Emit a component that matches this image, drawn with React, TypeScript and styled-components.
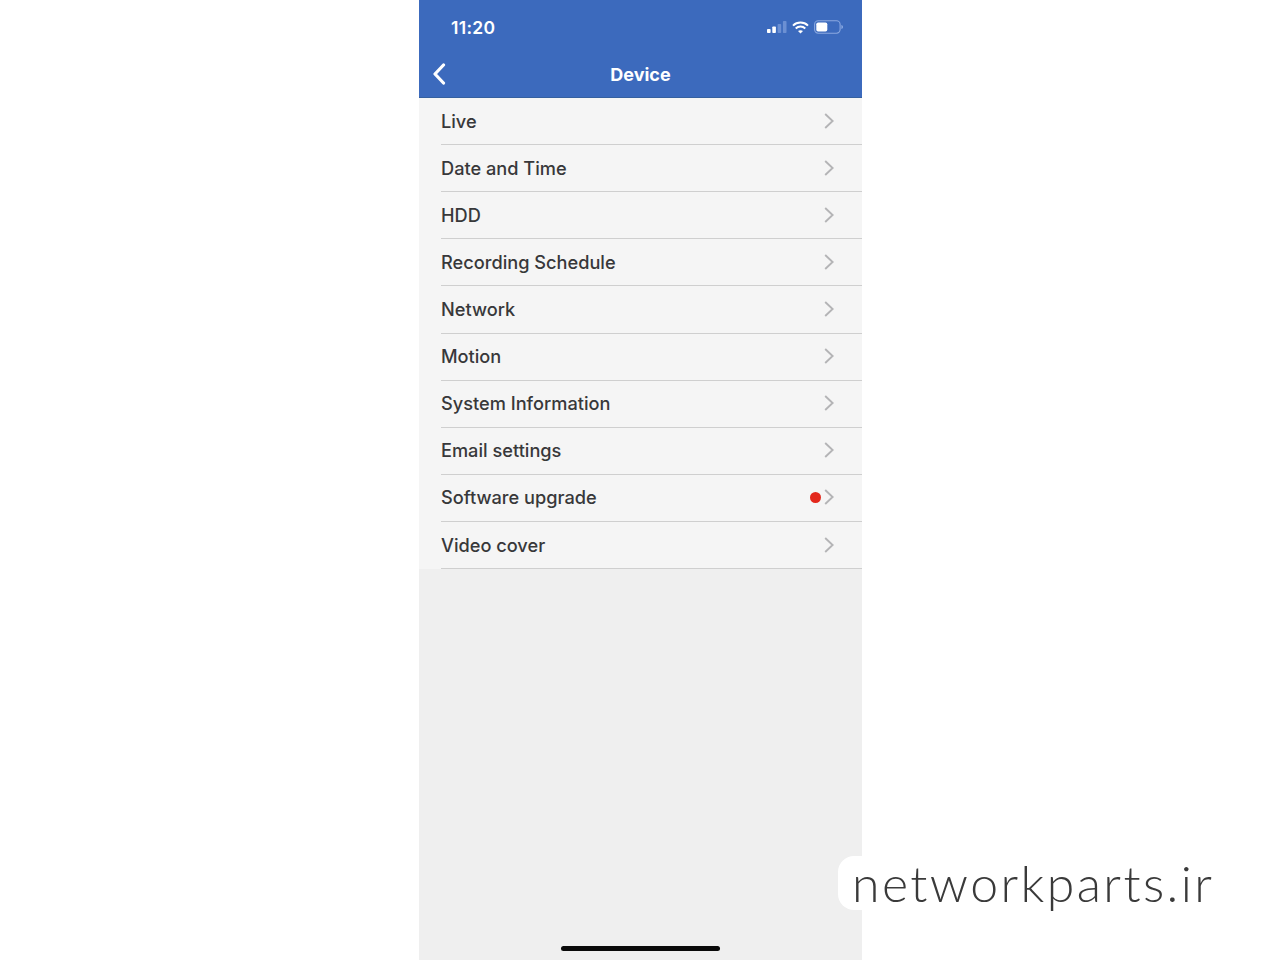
import React from "react";
import styled, { createGlobalStyle } from "styled-components";

const Global = createGlobalStyle`
  html, body { margin: 0; padding: 0; background: #fff; }
  body { font-family: Inter, "Liberation Sans", sans-serif; }
`;

const Page = styled.div`
  position: relative;
  width: 1280px;
  height: 960px;
  overflow: hidden;
  background: #fff;
  padding-left: 419px;
  box-sizing: border-box;
`;

const Phone = styled.main`
  position: relative;
  width: 443px;
  height: 960px;
  background: #efefef;
  display: flex;
  flex-direction: column;
`;

const Header = styled.header`
  height: 98px;
  background: #3c6abd;
  border-bottom: 1px solid #35609f;
  box-sizing: border-box;
  color: #fff;
  display: flex;
  flex-direction: column;
  flex-shrink: 0;
`;

const StatusBar = styled.div`
  height: 52px;
  display: flex;
  align-items: center;
  justify-content: space-between;
  padding: 2px 18px 0 32px;
`;

const Clock = styled.span`
  font-size: 17.5px;
  font-weight: 600;
  letter-spacing: 0.3px;
`;

const StatusIcons = styled.div`
  display: flex;
  align-items: center;
  gap: 5px;
`;

const NavBar = styled.div`
  position: relative;
  height: 46px;
  display: flex;
  align-items: center;
  justify-content: center;
`;

const BackIcon = styled.svg`
  position: absolute;
  left: 13px;
  top: 11px;
`;

const Title = styled.h1`
  margin: 0 0 0 0;
  font-size: 18px;
  font-weight: 700;
  line-height: 1;
`;

const List = styled.div`
  background: #f5f5f5;
  padding-left: 22px;
  margin-top: 0;
`;

const Row = styled.div`
  height: 47.12px;
  box-sizing: border-box;
  display: flex;
  align-items: center;
  justify-content: space-between;
  padding-right: 28px;
  border-bottom: 1px solid #cfcfcf;
`;

const Label = styled.span`
  font-size: 18.2px;
  font-weight: 500;
  color: #38383a;
  margin-top: -1px;
`;

const RowEnd = styled.div`
  display: flex;
  align-items: center;
  gap: 3px;
  margin-top: -1px;
`;

const Dot = styled.span`
  width: 11px;
  height: 11px;
  border-radius: 50%;
  background: #e3281c;
`;

const HomeBar = styled.div`
  position: absolute;
  left: 142px;
  bottom: 9px;
  width: 159px;
  height: 5px;
  border-radius: 3px;
  background: #0a0a0a;
`;

const Watermark = styled.div`
  position: absolute;
  left: 838px;
  top: 856px;
  height: 54px;
  width: 390px;
  padding-left: 14px;
  box-sizing: border-box;
  background: #fff;
  border-radius: 16px;
  display: flex;
  align-items: center;
  font-family: Lato, Inter, sans-serif;
  font-weight: 300;
  font-size: 50px;
  letter-spacing: 2.4px;
  color: #3a3a3a;
  line-height: 1;
  white-space: nowrap;
`;

const Chevron = () => (
  <svg width="10" height="16" viewBox="0 0 10 16" fill="none">
    <path d="M1.2 1 8.6 8 1.2 15" stroke="#b4b4b6" strokeWidth="1.9" />
  </svg>
);

const items: { label: string; dot?: boolean }[] = [
  { label: "Live" },
  { label: "Date and Time" },
  { label: "HDD" },
  { label: "Recording Schedule" },
  { label: "Network" },
  { label: "Motion" },
  { label: "System Information" },
  { label: "Email settings" },
  { label: "Software upgrade", dot: true },
  { label: "Video cover" },
];

export default function App() {
  return (
    <Page>
      <Global />
      <Phone>
        <Header>
          <StatusBar>
            <Clock>11:20</Clock>
            <StatusIcons>
              <svg width="20" height="14" viewBox="0 0 20 14">
                <rect x="0" y="9" width="3.6" height="4" rx="0.8" fill="#fff" />
                <rect x="5.3" y="6.5" width="3.6" height="6.5" rx="0.8" fill="#fff" />
                <rect x="10.6" y="4" width="3.6" height="9" rx="0.8" fill="#6c90d3" />
                <rect x="15.9" y="1" width="3.6" height="12" rx="0.8" fill="#6c90d3" />
              </svg>
              <svg width="17" height="13" viewBox="0 0 17 13" fill="none">
                <path d="M1 4.6C5.2.6 11.8.6 16 4.6" stroke="#fff" strokeWidth="2" />
                <path d="M3.7 7.4c2.7-2.4 6.9-2.4 9.6 0" stroke="#fff" strokeWidth="2" />
                <path d="M6 10c1.4-1.1 3.6-1.1 5 0l-2.5 2.6z" fill="#fff" />
              </svg>
              <svg width="30" height="14" viewBox="0 0 30 14" fill="none">
                <rect x="0.6" y="0.8" width="25.5" height="12.4" rx="3.6" stroke="#8aa8e0" strokeWidth="1.1" />
                <rect x="2.3" y="2.5" width="11" height="9" rx="1.8" fill="#fff" />
                <path d="M27.4 5v4c1-.3 1.6-1.1 1.6-2s-.6-1.7-1.6-2z" fill="#8aa8e0" />
              </svg>
            </StatusIcons>
          </StatusBar>
          <NavBar>
            <BackIcon width="14" height="22" viewBox="0 0 14 22" fill="none">
              <path d="M11.5 2 3 11l8.5 9" stroke="#fff" strokeWidth="3.2" strokeLinecap="round" strokeLinejoin="round" />
            </BackIcon>
            <Title>Device</Title>
          </NavBar>
        </Header>
        <List>
          {items.map((item) => (
            <Row key={item.label}>
              <Label>{item.label}</Label>
              <RowEnd>
                {item.dot && <Dot />}
                <Chevron />
              </RowEnd>
            </Row>
          ))}
        </List>
        <HomeBar />
      </Phone>
      <Watermark>networkparts.ir</Watermark>
    </Page>
  );
}
